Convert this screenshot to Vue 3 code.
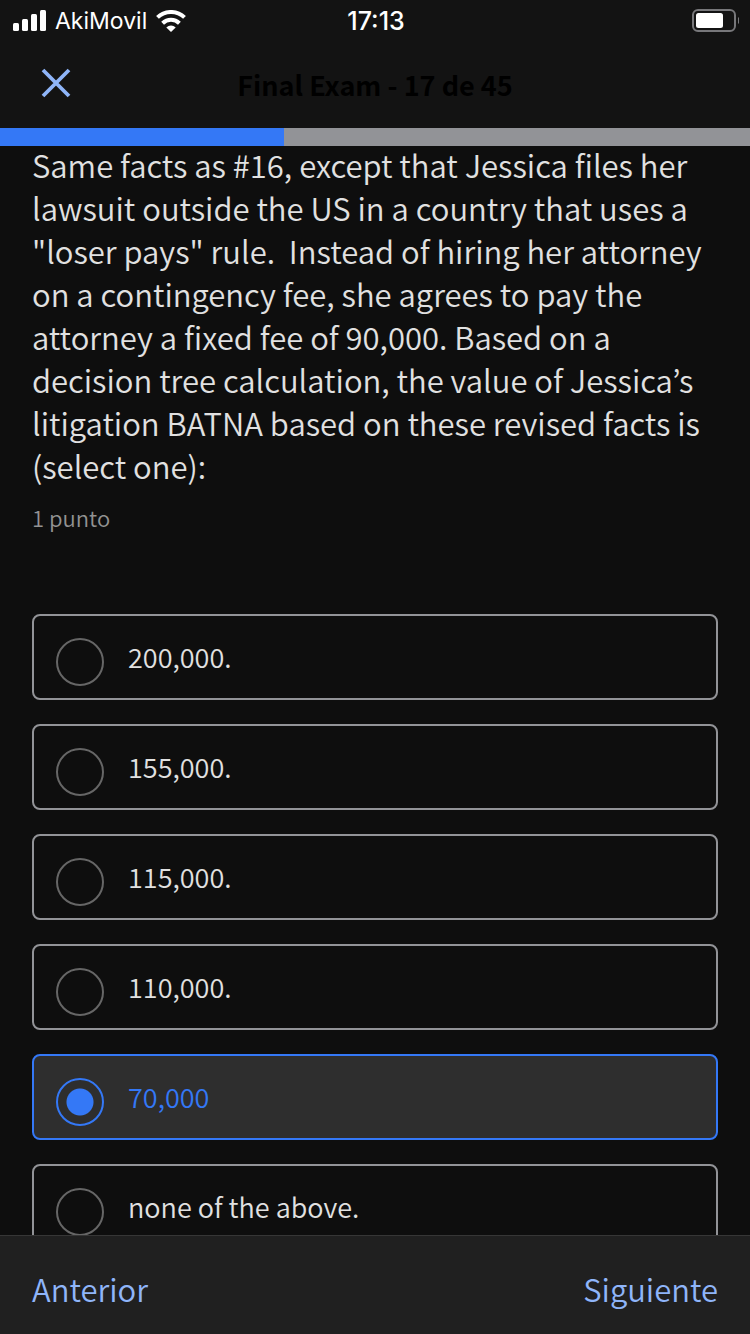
<script setup>
import { ref } from 'vue'

const current = 17
const total = 45
const progress = 37.9
const selected = ref('70,000')
const options = ['200,000.', '155,000.', '115,000.', '110,000.', '70,000', 'none of the above.']
const question =
  'Same facts as #16, except that Jessica files her lawsuit outside the US in a country that uses a "loser pays" rule.  Instead of hiring her attorney on a contingency fee, she agrees to pay the attorney a fixed fee of 90,000. Based on a decision tree calculation, the value of Jessica’s litigation BATNA based on these revised facts is (select one):'
</script>

<template>
  <div class="screen">
    <div class="status">
      <div class="carrier">
        <svg width="33" height="22" viewBox="0 0 33 22" fill="#fff" aria-hidden="true">
          <rect x="0" y="13" width="6" height="8" rx="1.5" />
          <rect x="9" y="9" width="6" height="12" rx="1.5" />
          <rect x="18" y="4" width="6" height="17" rx="1.5" />
          <rect x="27" y="0" width="6" height="21" rx="1.5" />
        </svg>
        <span>AkiMovil</span>
        <svg width="30" height="22" viewBox="0 0 30 22" aria-hidden="true">
          <g fill="none" stroke="#fff" stroke-width="4">
            <path d="M1.500 7.400A19.500 19.500 0 0 1 28.500 7.400" />
            <path d="M6.600 13.200A12 12 0 0 1 23.400 13.200" />
          </g>
          <path d="M10.300 17.400a7 7 0 0 1 9.400 0L15 22Z" fill="#fff" />
        </svg>
      </div>
      <time class="clock">17:13</time>
      <svg class="battery" width="48" height="24" viewBox="0 0 48 24" aria-hidden="true">
        <rect x="2" y="1" width="42" height="21" rx="5" fill="none" stroke="#77777a" stroke-width="2" />
        <rect x="5" y="4" width="27" height="15" rx="2.500" fill="#fff" />
        <path d="M47 8c2.500 1.500 2.500 5.500 0 7Z" fill="#77777a" />
      </svg>
    </div>
    <header class="bar">
      <button class="close" type="button" aria-label="Cerrar">
        <svg width="32" height="32" viewBox="0 0 32 32" aria-hidden="true">
          <path d="M3 2L29 28M29 2L3 28" stroke="#8fb5f9" stroke-width="3.800" />
        </svg>
      </button>
      <h1>Final Exam - {{ current }} de {{ total }}</h1>
    </header>
    <div class="track" role="progressbar" :aria-valuenow="current" :aria-valuemax="total">
      <div class="fill" :style="{ width: progress + '%' }"></div>
    </div>
    <main>
      <p id="question" class="question">{{ question }}</p>
      <p class="points">1 punto</p>
      <div class="options" role="radiogroup" aria-labelledby="question">
        <label v-for="o in options" :key="o" class="option" :class="{ on: selected === o }">
          <input v-model="selected" type="radio" name="answer" :value="o" />
          <span>{{ o }}</span>
        </label>
      </div>
    </main>
    <footer>
      <button type="button">Anterior</button>
      <button type="button">Siguiente</button>
    </footer>
  </div>
</template>

<style>
body {
  margin: 0;
  background: #0e0e0e;
}
</style>

<style scoped>
.screen {
  height: 100vh;
  display: flex;
  flex-direction: column;
  background: #0e0e0e;
  color: #e1e1e1;
  font-family: "Noto Sans CJK KR", sans-serif;
  font-weight: 350;
}
.status {
  display: grid;
  grid-template-columns: 1fr auto 1fr;
  align-items: center;
  height: 40px;
  padding: 0 11px 0 13px;
  background: #131313;
  color: #fff;
  font: 23px/42px Inter, sans-serif;
}
.carrier {
  display: flex;
  align-items: center;
  gap: 9px;
  height: 40px;
}
.clock {
  font-size: 25px;
  font-weight: 500;
}
.battery {
  justify-self: end;
}
.bar {
  display: grid;
  grid-template-columns: 80px 1fr 80px;
  align-items: center;
  height: 88px;
  background: #131313;
}
button {
  border: 0;
  padding: 0;
  background: none;
  color: #8fb5f9;
  font: inherit;
  cursor: pointer;
}
.close {
  justify-self: end;
  display: flex;
  padding: 8px;
}
h1 {
  margin: 0;
  padding-top: 2px;
  color: #000;
  font-size: 27px;
  line-height: 42px;
  font-weight: 700;
  text-align: center;
}
.track {
  position: relative;
  z-index: 1;
  height: 18px;
  flex: none;
  background: #929397;
}
.fill {
  height: 100%;
  background: #3478f6;
}
main {
  flex: 1;
  min-height: 0;
  margin-top: -3px;
  padding: 0 32px;
  overflow-y: auto;
  scrollbar-width: none;
}
.question {
  margin: 0;
  font-size: 31px;
  line-height: 43px;
  white-space: pre-wrap;
}
.points {
  margin: 13px 0 80px;
  color: #929292;
  font-size: 22px;
  line-height: 34px;
}
.options {
  display: flex;
  flex-direction: column;
  gap: 24px;
}
.option {
  display: flex;
  align-items: flex-start;
  gap: 24px;
  padding: 22px 22px 12px;
  border: 2px solid #929397;
  border-radius: 8px;
  font-size: 27px;
  line-height: 38px;
}
.option.on {
  border-color: #3478f6;
  background: #2e2e2e;
  color: #3478f6;
}
input {
  appearance: none;
  box-sizing: border-box;
  flex: none;
  width: 48px;
  height: 48px;
  margin: 0;
  border: 2px solid #666;
  border-radius: 50%;
}
input:checked {
  border-color: #3478f6;
  background: radial-gradient(circle, #3478f6 13px, transparent 14px);
}
footer {
  display: flex;
  justify-content: space-between;
  align-items: center;
  height: 90px;
  padding: 8px 32px 0;
  border-top: 1px solid #363636;
  background: #202020;
  font-size: 31px;
  line-height: 44px;
}
</style>
